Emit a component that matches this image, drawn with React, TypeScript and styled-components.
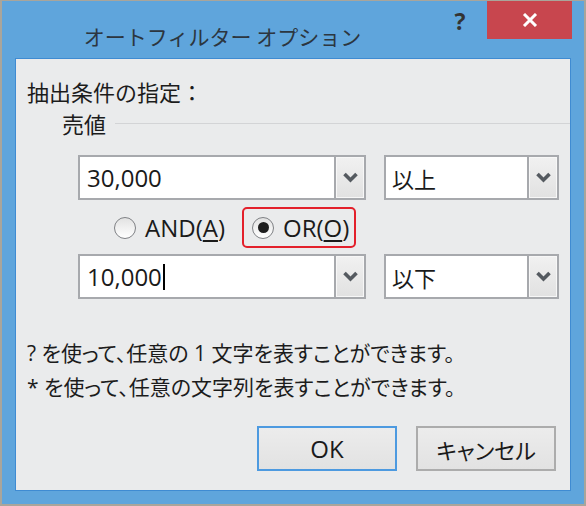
import React from "react";
import styled, { createGlobalStyle } from "styled-components";

const GlobalStyle = createGlobalStyle`
  html, body { margin: 0; padding: 0; background: #ffffff; }
  body { font-family: "Open Sans", "Noto Sans CJK JP", sans-serif; color: #1c1c1c; }
`;

const Window = styled.div`
  width: 586px;
  height: 506px;
  box-sizing: border-box;
  border: 2px solid #a9a59b;
  border-top-width: 1px;
  background: #5fa5dc;
  display: flex;
  flex-direction: column;
`;

const TitleBar = styled.div`
  height: 57px;
  flex: none;
  display: flex;
  align-items: flex-start;
`;

const TitleText = styled.div`
  flex: 1;
  text-align: center;
  padding-top: 21px;
  font-family: "Noto Sans CJK JP", sans-serif;
  font-size: 21px;
  line-height: 28px;
  color: #2c3640;
`;

const HelpGlyph = styled.div`
  width: 34px;
  margin-top: 5px;
  margin-right: 10px;
  text-align: center;
  font-family: "Open Sans", sans-serif;
  font-weight: 700;
  font-size: 23px;
  line-height: 30px;
  color: #333;
`;

const CloseButton = styled.div`
  width: 85px;
  height: 38px;
  margin-right: 12px;
  background: #c8464e;
  display: flex;
  align-items: center;
  justify-content: center;
`;

const Client = styled.div`
  flex: 1;
  margin: 0 13px 13px;
  background: #eaebec;
  border: 1px solid #3f8bd2;
  display: flex;
  flex-direction: column;
`;

const SectionLabel = styled.div`
  margin-top: 18px;
  padding-left: 11px;
  font-family: "Noto Sans CJK JP", sans-serif;
  font-size: 22px;
  line-height: 28px;
`;

const FieldRow = styled.div`
  margin-top: 4px;
  padding-left: 46px;
  height: 28px;
  display: flex;
  align-items: center;
  font-family: "Noto Sans CJK JP", sans-serif;
  font-size: 22px;
  line-height: 28px;
`;

const Rule = styled.div`
  flex: 1;
  height: 1px;
  margin-left: 9px;
  background: #d3d4d6;
`;

const ComboRow = styled.div<{ $top: number }>`
  margin-top: ${(p) => p.$top}px;
  padding-left: 62px;
  display: flex;
  gap: 18px;
`;

const Combo = styled.div<{ $w: number }>`
  width: ${(p) => p.$w}px;
  height: 45px;
  box-sizing: border-box;
  border: 2px solid #a7a9ad;
  background: #ffffff;
  display: flex;
`;

const ComboText = styled.div<{ $cjk?: boolean }>`
  flex: 1;
  display: flex;
  align-items: center;
  padding-left: ${(p) => (p.$cjk ? 6 : 7)}px;
  font-family: ${(p) => (p.$cjk ? `"Noto Sans CJK JP", sans-serif` : `"Open Sans", sans-serif`)};
  font-size: ${(p) => (p.$cjk ? 22 : 24)}px;
  color: #1a1a1a;
`;

const Caret = styled.span`
  display: inline-block;
  width: 2px;
  height: 26px;
  margin-left: 1px;
  background: #000;
`;

const DropButton = styled.div`
  width: 30px;
  box-sizing: border-box;
  border-left: 2px solid #a7a9ad;
  background: linear-gradient(#f1f1f1, #e1e1e1);
  box-shadow: inset 0 0 0 1px #f7f7f7;
  display: flex;
  align-items: center;
  justify-content: center;
`;

const RadioRow = styled.div`
  margin-top: 7px;
  padding-left: 88px;
  display: flex;
  align-items: center;
  gap: 10px;
`;

const RadioOption = styled.div<{ $focused?: boolean }>`
  height: 41px;
  box-sizing: border-box;
  border: 2px solid ${(p) => (p.$focused ? "#e3202b" : "transparent")};
  border-radius: 5px;
  padding: 0 5px 0 8px;
  display: flex;
  align-items: center;
  gap: 9px;
  font-family: "Open Sans", sans-serif;
  font-size: 24px;
  color: #1a1a1a;
`;

const RadioCircle = styled.span<{ $checked?: boolean }>`
  width: 22px;
  height: 22px;
  box-sizing: border-box;
  border-radius: 50%;
  border: 1.5px solid #7f8185;
  background: linear-gradient(#e2e2e2, #ffffff);
  display: flex;
  align-items: center;
  justify-content: center;
  &::after {
    content: "";
    display: ${(p) => (p.$checked ? "block" : "none")};
    width: 11px;
    height: 11px;
    border-radius: 50%;
    background: #1e1e1e;
  }
`;

const Accel = styled.span`
  text-decoration: underline;
  text-underline-offset: 3px;
  text-decoration-thickness: 1.5px;
`;

const HelpText = styled.div<{ $top: number }>`
  margin-top: ${(p) => p.$top}px;
  padding-left: 11px;
  font-family: "Open Sans", "Noto Sans CJK JP", sans-serif;
  font-feature-settings: "palt";
  font-size: 21px;
  line-height: 34px;
  white-space: nowrap;
`;

const ButtonRow = styled.div`
  margin-top: 22px;
  padding-right: 14px;
  display: flex;
  justify-content: flex-end;
  gap: 19px;
`;

const DialogButton = styled.div<{ $default?: boolean; $cjk?: boolean }>`
  width: 140px;
  height: 45px;
  box-sizing: border-box;
  border: 2px solid ${(p) => (p.$default ? "#4d9ae0" : "#acacac")};
  background: linear-gradient(#ececec, #e2e2e2);
  display: flex;
  align-items: center;
  justify-content: center;
  font-family: ${(p) => (p.$cjk ? `"Noto Sans CJK JP", sans-serif` : `"Open Sans", sans-serif`)};
  font-feature-settings: "palt";
  font-size: ${(p) => (p.$cjk ? 22 : 24)}px;
  color: #1a1a1a;
`;

const Chevron = () => (
  <svg width="15" height="11" viewBox="0 0 15 11">
    <path d="M1.5 2 L7.5 8 L13.5 2" fill="none" stroke="#555a60" strokeWidth="3.6" strokeLinejoin="miter" />
  </svg>
);

const CloseX = () => (
  <svg width="16" height="14" viewBox="0 0 16 14">
    <path d="M2 1 L14 13 M14 1 L2 13" stroke="#ffffff" strokeWidth="3" />
  </svg>
);

export default function App() {
  return (
    <>
      <GlobalStyle />
      <Window>
        <TitleBar>
          <TitleText>オートフィルター オプション</TitleText>
          <HelpGlyph>?</HelpGlyph>
          <CloseButton>
            <CloseX />
          </CloseButton>
        </TitleBar>
        <Client>
          <SectionLabel>抽出条件の指定：</SectionLabel>
          <FieldRow>
            売値
            <Rule />
          </FieldRow>
          <ComboRow $top={18}>
            <Combo $w={288}>
              <ComboText>30,000</ComboText>
              <DropButton>
                <Chevron />
              </DropButton>
            </Combo>
            <Combo $w={175}>
              <ComboText $cjk>以上</ComboText>
              <DropButton>
                <Chevron />
              </DropButton>
            </Combo>
          </ComboRow>
          <RadioRow>
            <RadioOption>
              <RadioCircle />
              <span>
                AND(<Accel>A</Accel>)
              </span>
            </RadioOption>
            <RadioOption $focused>
              <RadioCircle $checked />
              <span>
                OR(<Accel>O</Accel>)
              </span>
            </RadioOption>
          </RadioRow>
          <ComboRow $top={6}>
            <Combo $w={288}>
              <ComboText>
                10,000
                <Caret />
              </ComboText>
              <DropButton>
                <Chevron />
              </DropButton>
            </Combo>
            <Combo $w={175}>
              <ComboText $cjk>以下</ComboText>
              <DropButton>
                <Chevron />
              </DropButton>
            </Combo>
          </ComboRow>
          <HelpText $top={37}>? を使って、任意の 1 文字を表すことができます。</HelpText>
          <HelpText $top={0}>* を使って、任意の文字列を表すことができます。</HelpText>
          <ButtonRow>
            <DialogButton $default>OK</DialogButton>
            <DialogButton $cjk>キャンセル</DialogButton>
          </ButtonRow>
        </Client>
      </Window>
    </>
  );
}
